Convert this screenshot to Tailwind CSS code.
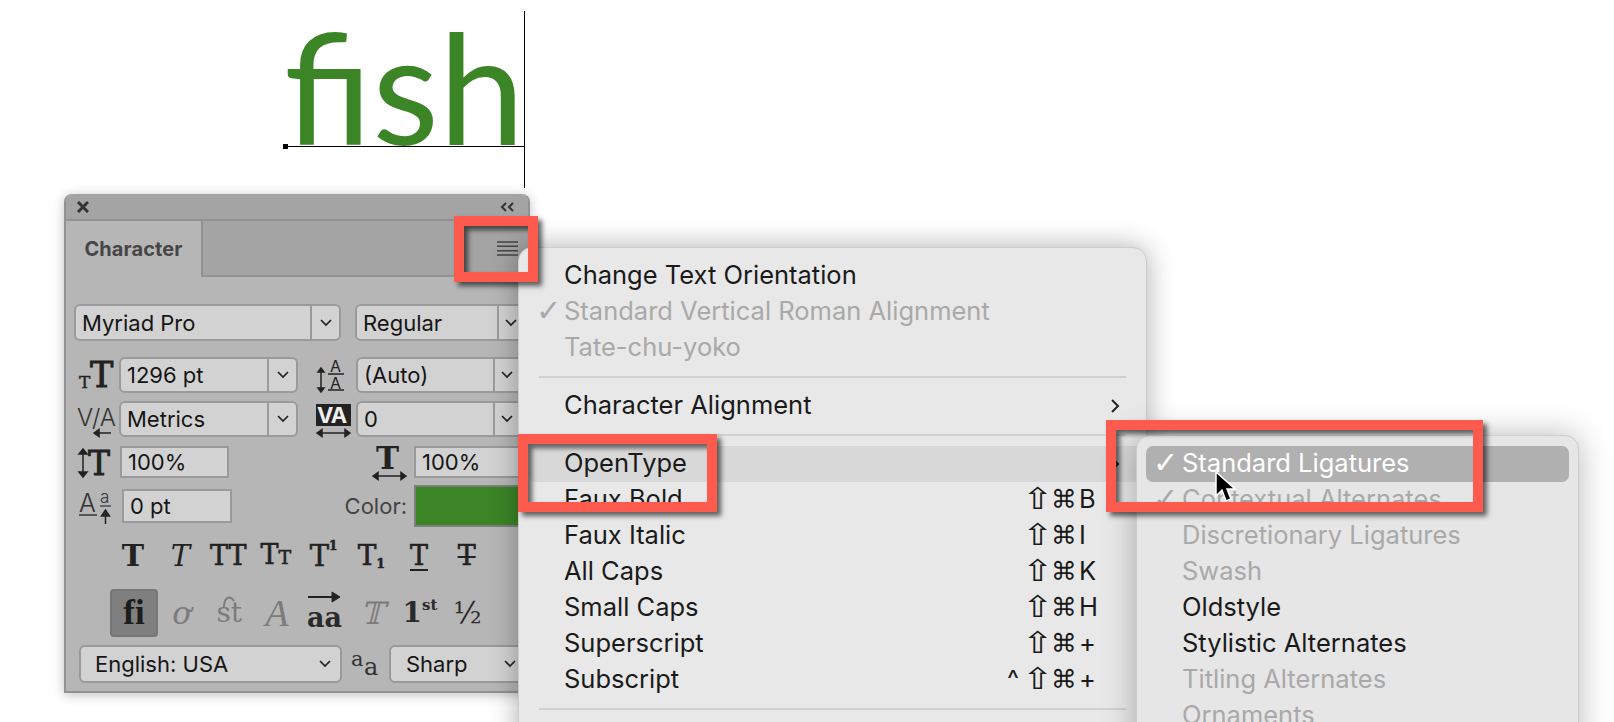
<!DOCTYPE html>
<html lang="en">
<head>
  <meta charset="UTF-8">
  <title>Character panel</title>
  <script src="https://cdn.jsdelivr.net/npm/@tailwindcss/browser@4"></script>
</head>
<body class="bg-white font-['Inter',sans-serif]">
<div class="relative w-[1614px] h-[722px] overflow-hidden bg-white">

  <!-- text frame on the canvas -->
  <div class="absolute left-[283px] top-[11px] w-[242px] h-[177px]">
    <div class="absolute left-[1px] top-[-35px] text-[154px] leading-[220px] text-[#3b8526] font-['Lato',sans-serif] whitespace-nowrap">fish</div>
    <div class="absolute right-0 top-0 w-[1px] h-[177px] bg-black"></div>
    <div class="absolute left-[3px] right-0 top-[135px] h-[1px] bg-black"></div>
    <div class="absolute left-0 top-[133px] w-[5px] h-[5px] bg-black"></div>
  </div>

  <!-- character panel -->
  <div class="absolute left-[64px] top-[194px] w-[466px] h-[499px] flex flex-col rounded-t-[8px] border-2 border-t-0 border-[#929292] bg-[#b6b6b6] shadow-[0_2px_12px_rgba(0,0,0,0.25)] text-[#161616] text-[22px]">
    <div class="h-[27px] shrink-0 flex items-center justify-between pl-[11px] pr-[13px] bg-[#a4a4a4] rounded-t-[8px] border-b-2 border-[#929292]">
      <svg width="12" height="12" viewBox="0 0 12 12"><path d="M1 1l10 10M11 1L1 11" stroke="#333" stroke-width="3"/></svg>
      <svg width="15" height="10" viewBox="0 0 15 10" fill="none" stroke="#333" stroke-width="2"><path d="M6 1L2 5l4 4M13 1L9 5l4 4"/></svg>
    </div>
    <div class="h-[56px] shrink-0 flex">
      <div class="w-[137px] flex items-center justify-center font-bold text-[20px] tracking-[0.1px] text-[#464646] border-r-2 border-[#929292] pb-[1px]">Character</div>
      <div class="flex-1 bg-[#a4a4a4] border-b-2 border-[#929292] flex justify-end items-start pt-[20px] pr-[10px]">
        <svg width="21" height="15" viewBox="0 0 21 15" stroke="#444" stroke-width="1.4"><path d="M0 1h21M0 5.300h21M0 9.700h21M0 14h21"/></svg>
      </div>
    </div>

    <!-- font family / style -->
    <div class="mt-[27px] -ml-[2px] h-[37px] flex pl-[10px] gap-[14px] shrink-0">
      <div class="w-[267px] flex rounded-[6px] border-2 border-[#9a9a9a] bg-[#d2d2d2]">
        <div class="flex-1 flex items-center pl-[6px] pt-[1px]">Myriad Pro</div>
        <div class="w-[29px] border-l-2 border-[#9a9a9a] flex items-center justify-center"><svg width="12" height="8" viewBox="0 0 12 8" fill="none" stroke="#222" stroke-width="1.700"><path d="M1 1l5 5 5-5"/></svg></div>
      </div>
      <div class="w-[168px] flex rounded-[6px] border-2 border-[#9a9a9a] bg-[#d2d2d2]">
        <div class="flex-1 flex items-center pl-[6px] pt-[1px]">Regular</div>
        <div class="w-[24px] border-l-2 border-[#9a9a9a] flex items-center pl-[6px]"><svg width="12" height="8" viewBox="0 0 12 8" fill="none" stroke="#222" stroke-width="1.700"><path d="M1 1l5 5 5-5"/></svg></div>
      </div>
    </div>

    <!-- size / leading -->
    <div class="mt-[16px] -ml-[2px] h-[36px] flex shrink-0 items-center">
      <svg class="w-[55px] h-[36px] shrink-0 overflow-visible" viewBox="0 0 55 36" fill="#222" stroke="#222" stroke-width="0.400" font-family="DejaVu Serif"><text x="15" y="31" font-size="17">T</text><text x="26" y="30" font-size="35" stroke-width="0.900">T</text></svg>
      <div class="w-[179px] h-full flex rounded-[6px] border-2 border-[#9a9a9a] bg-[#d2d2d2]">
        <div class="flex-1 flex items-center pl-[6px] pt-[1px]">1296 pt</div>
        <div class="w-[29px] border-l-2 border-[#9a9a9a] flex items-center justify-center"><svg width="12" height="8" viewBox="0 0 12 8" fill="none" stroke="#222" stroke-width="1.700"><path d="M1 1l5 5 5-5"/></svg></div>
      </div>
      <svg class="ml-[5px] w-[53px] h-[36px] shrink-0 overflow-visible" viewBox="0 0 53 36" fill="#222" font-family="Inter"><path d="M18 12v22M18 11l-3 4h6zM18 35l-3-4h6z" stroke="#222" stroke-width="1.500"/><text x="27" y="15" font-size="16">A</text><path d="M25 17h16M25 33h16" stroke="#222" stroke-width="1.500"/><text x="27" y="32" font-size="16">A</text></svg>
      <div class="w-[168px] h-full flex rounded-[6px] border-2 border-[#9a9a9a] bg-[#d2d2d2]">
        <div class="flex-1 flex items-center pl-[6px] pt-[1px]">(Auto)</div>
        <div class="w-[29px] border-l-2 border-[#9a9a9a] flex items-center pl-[6px]"><svg width="12" height="8" viewBox="0 0 12 8" fill="none" stroke="#222" stroke-width="1.700"><path d="M1 1l5 5 5-5"/></svg></div>
      </div>
    </div>

    <!-- kerning / tracking -->
    <div class="mt-[8px] -ml-[2px] h-[36px] flex shrink-0 items-center">
      <svg class="w-[55px] h-[36px] shrink-0 overflow-visible" viewBox="0 0 55 36" fill="#333" font-family="Inter"><text x="13" y="25" font-size="24" font-weight="300">V/A</text><path d="M30 32h17M30 32l5-3.500v7z" stroke="#222" stroke-width="1.500"/></svg>
      <div class="w-[179px] h-full flex rounded-[6px] border-2 border-[#9a9a9a] bg-[#d2d2d2]">
        <div class="flex-1 flex items-center pl-[6px] pt-[1px]">Metrics</div>
        <div class="w-[29px] border-l-2 border-[#9a9a9a] flex items-center justify-center"><svg width="12" height="8" viewBox="0 0 12 8" fill="none" stroke="#222" stroke-width="1.700"><path d="M1 1l5 5 5-5"/></svg></div>
      </div>
      <svg class="ml-[5px] w-[53px] h-[36px] shrink-0 overflow-visible" viewBox="0 0 53 36" font-family="Inter"><rect x="13" y="3" width="35" height="22" fill="#222"/><text x="14" y="22" font-size="22" font-weight="700" letter-spacing="-1" fill="#eee">VA</text><path d="M14 32h33M14 32l5-3.500v7zM47 32l-5-3.500v7z" stroke="#222" stroke-width="1.500" fill="#222"/></svg>
      <div class="w-[168px] h-full flex rounded-[6px] border-2 border-[#9a9a9a] bg-[#d2d2d2]">
        <div class="flex-1 flex items-center pl-[6px] pt-[1px]">0</div>
        <div class="w-[29px] border-l-2 border-[#9a9a9a] flex items-center pl-[6px]"><svg width="12" height="8" viewBox="0 0 12 8" fill="none" stroke="#222" stroke-width="1.700"><path d="M1 1l5 5 5-5"/></svg></div>
      </div>
    </div>

    <!-- scale -->
    <div class="mt-[9px] -ml-[2px] h-[32px] flex shrink-0 items-center">
      <svg class="w-[56px] h-[32px] shrink-0 overflow-visible" viewBox="0 0 56 32" fill="#222" stroke="#222" stroke-width="0.900" font-family="DejaVu Serif"><path d="M19 5v23M19 3l-4 5h8zM19 31l-4-5h8z" stroke-width="1.500"/><text x="24" y="29" font-size="33">T</text></svg>
      <div class="w-[109px] h-full flex items-center pl-[6px] border-2 border-[#9a9a9a] bg-[#d2d2d2]">100%</div>
      <svg class="ml-[140px] w-[45px] h-[36px] shrink-0 overflow-visible" viewBox="0 0 45 36" fill="#222" font-family="DejaVu Serif"><text x="7" y="25" font-size="31" font-weight="700">T</text><path d="M4 32h33M4 32l5-3.500v7zM37 32l-5-3.500v7z" stroke="#222" stroke-width="1.500"/></svg>
      <div class="w-[110px] h-full flex items-center pl-[6px] border-2 border-[#9a9a9a] bg-[#d2d2d2]">100%</div>
    </div>

    <!-- baseline / colour -->
    <div class="mt-[7px] -ml-[2px] h-[42px] flex shrink-0 items-center">
      <svg class="w-[58px] h-[42px] shrink-0 overflow-visible" viewBox="0 0 58 42" fill="#333" font-family="Inter"><text x="15" y="27" font-size="25" font-weight="300">A</text><path d="M15 30h18" stroke="#333" stroke-width="1.500"/><text x="36" y="18" font-size="17" font-weight="300">a</text><path d="M36 21h11" stroke="#333" stroke-width="1.200"/><path d="M41.500 39V28M41.500 25l-4 6h8z" stroke="#222" stroke-width="1.500"/></svg>
      <div class="w-[110px] h-[34px] flex items-center pl-[6px] border-2 border-[#9a9a9a] bg-[#d2d2d2]">0 pt</div>
      <div class="w-[182px] text-right pr-[7px] text-[#444]">Color:</div>
      <div class="w-[112px] h-full bg-[#3b8526] border-2 border-[#7e7e7e]"></div>
    </div>

    <!-- style buttons -->
    <div class="mt-[12px] h-[32px] grid grid-cols-[repeat(8,47.7px)] ml-[43px] shrink-0 font-['DejaVu_Serif',serif] text-[#222] items-center text-center">
      <span class="text-[30px] leading-[32px] font-bold">T</span>
      <span class="text-[29px] leading-[32px] italic">T</span>
      <span class="text-[27px] leading-[32px] [-webkit-text-stroke:0.6px_#222]">TT</span>
      <span class="text-[27px] leading-[32px] [-webkit-text-stroke:0.6px_#222]">T<span class="text-[19px]">T</span></span>
      <span class="text-[29px] leading-[32px] [-webkit-text-stroke:0.6px_#222]">T<sup class="text-[12px] font-bold top-[-16px]">1</sup></span>
      <span class="text-[28px] leading-[32px] [-webkit-text-stroke:0.6px_#222]">T<sub class="text-[12px] font-bold bottom-[-3px]">1</sub></span>
      <span class="text-[27px] leading-[28px] [-webkit-text-stroke:0.6px_#222] underline underline-offset-[4px] decoration-2">T</span>
      <span class="text-[27px] leading-[32px] [-webkit-text-stroke:0.6px_#222] line-through decoration-2">T</span>
    </div>

    <!-- opentype buttons -->
    <div class="mt-[17px] h-[48px] grid grid-cols-[repeat(8,47.7px)] ml-[44px] shrink-0 font-['DejaVu_Serif',serif] items-center text-center text-[#7c7c7c]">
      <span class="h-[48px] w-[48px] flex items-center justify-center rounded-[4px] bg-[#7f7f7f] border-2 border-[#767676] text-[#1c1c1c] text-[35px] font-bold font-['Liberation_Serif',serif]">fi</span>
      <span class="text-[31px] italic">ơ</span>
      <span class="relative text-[28px]">st<svg class="absolute left-[12px] top-[3px] overflow-visible" width="24" height="14" viewBox="0 0 24 14" fill="none" stroke="#7c7c7c" stroke-width="2"><path d="M7 12C7 2 13 0 17 6"/></svg></span>
      <span class="text-[38px] leading-[40px] italic font-['Liberation_Serif',serif]">A</span>
      <span class="relative text-[27px] text-[#2a2a2a] font-bold pt-[10px]">aa<svg class="absolute left-[6px] top-[3px]" width="34" height="12" viewBox="0 0 34 12" fill="#222" stroke="#222"><path d="M1 6h30" stroke-width="2"/><path d="M33 6l-8-5v10z"/></svg></span>
      <span class="text-[31px] italic">𝕋</span>
      <span class="text-[28px] text-[#2a2a2a] font-bold">1<sup class="text-[15px] font-semibold top-[-12px]">st</sup></span>
      <span class="text-[29px] text-[#2a2a2a]">½</span>
    </div>

    <!-- language / antialias -->
    <div class="mt-[9px] -ml-[2px] h-[38px] flex shrink-0 items-center pl-[15px]">
      <div class="w-[263px] h-full flex items-center justify-between pl-[14px] pr-[9px] rounded-[6px] border-2 border-[#9a9a9a] bg-[#d2d2d2]">English: USA<svg width="12" height="8" viewBox="0 0 12 8" fill="none" stroke="#222" stroke-width="1.700"><path d="M1 1l5 5 5-5"/></svg></div>
      <svg class="w-[47px] h-[38px] shrink-0 overflow-visible" viewBox="0 0 47 38" fill="#333" font-family="DejaVu Serif"><text x="9" y="21" font-size="21">a</text><text x="22" y="30" font-size="24">a</text></svg>
      <div class="w-[135px] h-full flex items-center justify-between pl-[15px] pr-[6px] rounded-[6px] border-2 border-[#9a9a9a] bg-[#d2d2d2]">Sharp<svg width="12" height="8" viewBox="0 0 12 8" fill="none" stroke="#222" stroke-width="1.700"><path d="M1 1l5 5 5-5"/></svg></div>
    </div>
  </div>

  <!-- main menu -->
  <div class="absolute left-[518px] top-[247px] w-[629px] h-[520px] pt-[10px] rounded-[14px] border border-[#cdcdcd] bg-[#e8e8e8] shadow-[0_0_28px_rgba(0,0,0,0.32)] text-[25.500px] leading-[34px] text-[#1a1a1a]">
    <div class="h-9 flex pl-[45px]">Change Text Orientation</div>
    <div class="h-9 flex text-[#a9a9a9]"><span class="w-[45px] pl-[17px] text-[30px] font-['DejaVu_Sans',sans-serif]">✓</span>Standard Vertical Roman Alignment</div>
    <div class="h-9 flex pl-[45px] text-[#a9a9a9]">Tate-chu-yoko</div>
    <div class="h-[22px] flex items-center px-[20px]"><div class="w-full h-[2px] bg-[#d0d0d0]"></div></div>
    <div class="h-9 flex pl-[45px] pr-[26px] justify-between"><span>Character Alignment</span><svg class="self-center" width="9" height="14" viewBox="0 0 9 14" fill="none" stroke="#222" stroke-width="2"><path d="M1 1l6 6-6 6"/></svg></div>
    <div class="h-[22px] flex items-center px-[20px]"><div class="w-full h-[2px] bg-[#d0d0d0]"></div></div>
    <div class="h-9 flex ml-[10px] pl-[35px] pr-[26px] justify-between bg-[#d8d8d8] rounded-l-[6px]"><span>OpenType</span><svg class="self-center" width="9" height="14" viewBox="0 0 9 14" fill="none" stroke="#222" stroke-width="2"><path d="M1 1l6 6-6 6"/></svg></div>
    <div class="h-9 flex pl-[45px] pr-[17px]"><span>Faux Bold</span><span class="ml-auto w-[24px] text-center text-[30px] scale-x-125 font-['DejaVu_Sans',sans-serif]">⇧</span><span class="ml-[2px] w-[24px] text-center font-['DejaVu_Sans',sans-serif]">⌘</span><span class="ml-[4px] w-[50px]">B</span></div>
    <div class="h-9 flex pl-[45px] pr-[17px]"><span>Faux Italic</span><span class="ml-auto w-[24px] text-center text-[30px] scale-x-125 font-['DejaVu_Sans',sans-serif]">⇧</span><span class="ml-[2px] w-[24px] text-center font-['DejaVu_Sans',sans-serif]">⌘</span><span class="ml-[4px] w-[50px]">I</span></div>
    <div class="h-9 flex pl-[45px] pr-[17px]"><span>All Caps</span><span class="ml-auto w-[24px] text-center text-[30px] scale-x-125 font-['DejaVu_Sans',sans-serif]">⇧</span><span class="ml-[2px] w-[24px] text-center font-['DejaVu_Sans',sans-serif]">⌘</span><span class="ml-[4px] w-[50px]">K</span></div>
    <div class="h-9 flex pl-[45px] pr-[17px]"><span>Small Caps</span><span class="ml-auto w-[24px] text-center text-[30px] scale-x-125 font-['DejaVu_Sans',sans-serif]">⇧</span><span class="ml-[2px] w-[24px] text-center font-['DejaVu_Sans',sans-serif]">⌘</span><span class="ml-[4px] w-[50px]">H</span></div>
    <div class="h-9 flex pl-[45px] pr-[17px]"><span>Superscript</span><span class="ml-auto w-[24px] text-center text-[30px] scale-x-125 font-['DejaVu_Sans',sans-serif]">⇧</span><span class="ml-[2px] w-[24px] text-center font-['DejaVu_Sans',sans-serif]">⌘</span><span class="ml-[4px] w-[50px]">+</span></div>
    <div class="h-9 flex pl-[45px] pr-[17px]"><span>Subscript</span><span class="ml-auto w-[24px] text-center">^</span><span class="w-[24px] text-center text-[30px] scale-x-125 font-['DejaVu_Sans',sans-serif]">⇧</span><span class="ml-[2px] w-[24px] text-center font-['DejaVu_Sans',sans-serif]">⌘</span><span class="ml-[4px] w-[50px]">+</span></div>
    <div class="h-[22px] flex items-center px-[20px]"><div class="w-full h-[2px] bg-[#d0d0d0]"></div></div>
  </div>

  <!-- submenu -->
  <div class="absolute left-[1136px] top-[435px] w-[443px] h-[320px] px-[9px] pt-[10px] rounded-[14px] border border-[#cdcdcd] bg-[#e6e6e6] shadow-[0_0_32px_rgba(0,0,0,0.28)] text-[25.500px] leading-[34px] text-[#a9a9a9]">
    <div class="h-9 flex rounded-[7px] bg-[#b0b0b0] text-white"><span class="w-[36px] pl-[7px] text-[30px] font-['DejaVu_Sans',sans-serif]">✓</span>Standard Ligatures</div>
    <div class="h-9 flex"><span class="w-[36px] pl-[7px] text-[30px] font-['DejaVu_Sans',sans-serif]">✓</span>Contextual Alternates</div>
    <div class="h-9 pl-[36px]">Discretionary Ligatures</div>
    <div class="h-9 pl-[36px]">Swash</div>
    <div class="h-9 pl-[36px] text-[#1a1a1a]">Oldstyle</div>
    <div class="h-9 pl-[36px] text-[#1a1a1a]">Stylistic Alternates</div>
    <div class="h-9 pl-[36px]">Titling Alternates</div>
    <div class="h-9 pl-[36px]">Ornaments</div>
  </div>

  <!-- cursor -->
  <svg class="absolute left-[1212px] top-[470px]" width="28" height="36" viewBox="0 0 28 36"><path d="M4 2v24l6-6 4 11 5-2-4-10h8z" fill="#000" stroke="#fff" stroke-width="1.500"/></svg>

  <!-- red highlight boxes -->
  <div class="absolute left-[454px] top-[216px] w-[84px] h-[66px] border-[10px] border-[#fe5a4e] shadow-[4px_4px_5px_rgba(0,0,0,0.6),inset_4px_4px_5px_rgba(0,0,0,0.6)]"></div>
  <div class="absolute left-[518px] top-[434px] w-[199px] h-[78px] border-[10px] border-[#fe5a4e] shadow-[4px_4px_5px_rgba(0,0,0,0.6),inset_4px_4px_5px_rgba(0,0,0,0.6)]"></div>
  <div class="absolute left-[1106px] top-[420px] w-[377px] h-[92px] border-[10px] border-[#fe5a4e] shadow-[4px_4px_5px_rgba(0,0,0,0.6),inset_4px_4px_5px_rgba(0,0,0,0.6)]"></div>
</div>
</body>
</html>
